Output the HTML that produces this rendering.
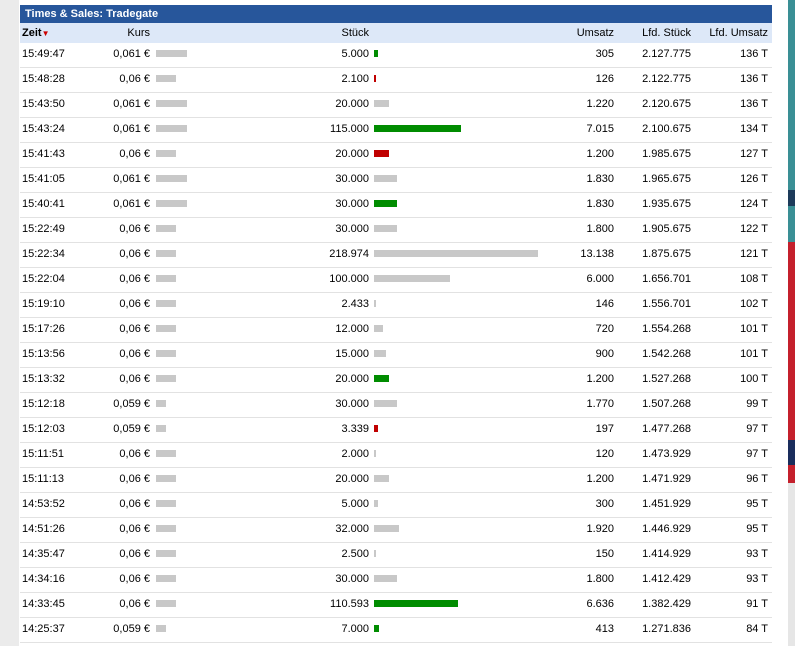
<!DOCTYPE html>
<html><head><meta charset="utf-8"><style>
*{margin:0;padding:0;box-sizing:border-box}
body{width:795px;height:646px;overflow:hidden;background:#fff;font-family:"Liberation Sans",Arial,sans-serif;font-size:11px;color:#000;position:relative}
.lg{position:absolute;left:0;top:0;width:19px;height:646px;background:#ebebeb}
.t{position:absolute;left:20px;top:5px;width:752px}
.hd{height:18px;background:#27569b;color:#fff;font-weight:bold;padding:3px 0 0 5px;font-size:11px}
.ch{height:20px;background:#dde8f8;position:relative}
.r{height:25px;position:relative;border-bottom:1px solid #e2e2e2}
.c{position:absolute;top:5px;white-space:nowrap}
.ch .c{top:4px}
.z{left:2px}.k{right:622px}.s{right:403px}.u{right:158px}.l{right:81px}.m{right:4px}
.b{position:absolute;height:7px;top:7px}
.kb{left:136px;background:#c8c8c8}
.sb{left:354px}
.g{background:#008c00}.rd{background:#c00000}.gr{background:#c8c8c8}
.side{position:absolute;left:788px;width:7px}
</style></head><body>
<div class="lg"></div>
<div class="side" style="top:0;height:190px;background:#3a8f95"></div>
<div class="side" style="top:190px;height:16px;background:#1d3b5a"></div>
<div class="side" style="top:206px;height:36px;background:#3a8f95"></div>
<div class="side" style="top:242px;height:198px;background:#c4202c"></div>
<div class="side" style="top:440px;height:25px;background:#1a2d5c"></div>
<div class="side" style="top:465px;height:18px;background:#c4202c"></div>
<div class="side" style="top:483px;height:163px;background:#e6e6e6"></div>
<div class="t">
<div class="hd">Times &amp; Sales: Tradegate</div>
<div class="ch"><span class="c z" style="font-weight:bold">Zeit<span style="color:#c00;font-size:8px">▼</span></span><span class="c k">Kurs</span><span class="c s">Stück</span><span class="c u">Umsatz</span><span class="c l">Lfd. Stück</span><span class="c m">Lfd. Umsatz</span></div>
<div id="rows"></div>
</div>
<script>
var d=[
["15:49:47","0,061","5.000","g",4,"305","2.127.775","136"],
["15:48:28","0,06","2.100","rd",2,"126","2.122.775","136"],
["15:43:50","0,061","20.000","gr",15,"1.220","2.120.675","136"],
["15:43:24","0,061","115.000","g",87,"7.015","2.100.675","134"],
["15:41:43","0,06","20.000","rd",15,"1.200","1.985.675","127"],
["15:41:05","0,061","30.000","gr",23,"1.830","1.965.675","126"],
["15:40:41","0,061","30.000","g",23,"1.830","1.935.675","124"],
["15:22:49","0,06","30.000","gr",23,"1.800","1.905.675","122"],
["15:22:34","0,06","218.974","gr",164,"13.138","1.875.675","121"],
["15:22:04","0,06","100.000","gr",76,"6.000","1.656.701","108"],
["15:19:10","0,06","2.433","gr",2,"146","1.556.701","102"],
["15:17:26","0,06","12.000","gr",9,"720","1.554.268","101"],
["15:13:56","0,06","15.000","gr",12,"900","1.542.268","101"],
["15:13:32","0,06","20.000","g",15,"1.200","1.527.268","100"],
["15:12:18","0,059","30.000","gr",23,"1.770","1.507.268","99"],
["15:12:03","0,059","3.339","rd",4,"197","1.477.268","97"],
["15:11:51","0,06","2.000","gr",2,"120","1.473.929","97"],
["15:11:13","0,06","20.000","gr",15,"1.200","1.471.929","96"],
["14:53:52","0,06","5.000","gr",4,"300","1.451.929","95"],
["14:51:26","0,06","32.000","gr",25,"1.920","1.446.929","95"],
["14:35:47","0,06","2.500","gr",2,"150","1.414.929","93"],
["14:34:16","0,06","30.000","gr",23,"1.800","1.412.429","93"],
["14:33:45","0,06","110.593","g",84,"6.636","1.382.429","91"],
["14:25:37","0,059","7.000","g",5,"413","1.271.836","84"]];
var h="";d.forEach(function(r){var kw=r[1]=="0,061"?31:r[1]=="0,06"?20:10;
h+='<div class="r"><span class="c z">'+r[0]+'</span><span class="c k">'+r[1]+' €</span><span class="b kb" style="width:'+kw+'px"></span><span class="c s">'+r[2]+'</span><span class="b sb '+r[3]+'" style="width:'+r[4]+'px"></span><span class="c u">'+r[5]+'</span><span class="c l">'+r[6]+'</span><span class="c m">'+r[7]+' T</span></div>';});
document.getElementById("rows").innerHTML=h;
</script>
</body></html>
